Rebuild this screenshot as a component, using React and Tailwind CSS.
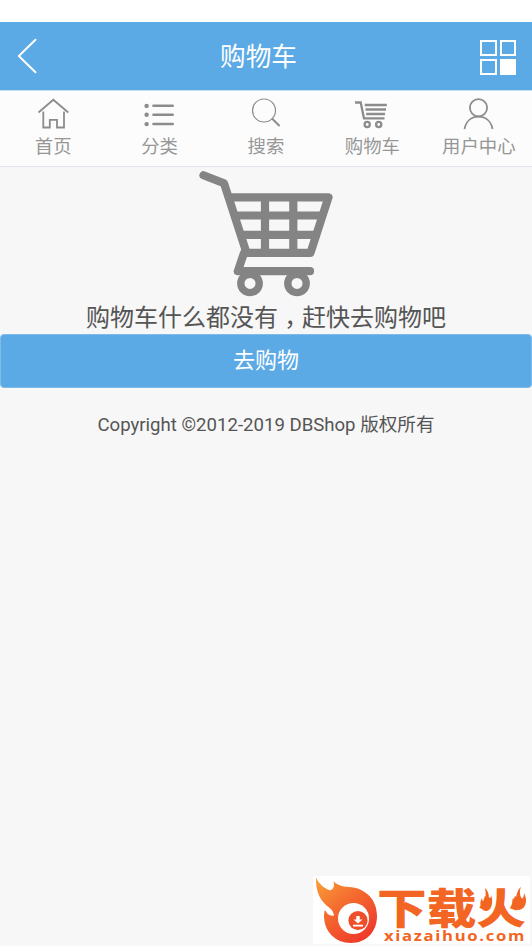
import React from "react";

const NAV_ITEMS = [
  { label: "首页", Icon: HomeIcon },
  { label: "分类", Icon: ListIcon },
  { label: "搜索", Icon: SearchIcon },
  { label: "购物车", Icon: SmallCartIcon },
  { label: "用户中心", Icon: UserIcon },
];

function HomeIcon() {
  return (
    <svg width="32" height="32" viewBox="0 0 32 32" fill="none" stroke="#8c8c8c" strokeWidth="1.8">
      <path d="M1.500 14.500 16.300 1.700 31.300 14.500" />
      <path d="M6.300 13.500V29.500H12.800V21.800H20V29.500H27V13.500" />
    </svg>
  );
}

function ListIcon() {
  return (
    <svg width="32" height="32" viewBox="0 0 32 32" stroke="#8c8c8c" strokeWidth="2.6" strokeLinecap="round">
      <path d="M9.500 7.700H28.700M9.500 16.800H28.700M9.500 26H28.700" />
      <g fill="#8c8c8c" stroke="none">
        <circle cx="2.600" cy="7.900" r="2.200" />
        <circle cx="2.600" cy="16.800" r="2.200" />
        <circle cx="2.600" cy="26.100" r="2.200" />
      </g>
    </svg>
  );
}

function SearchIcon() {
  return (
    <svg width="32" height="32" viewBox="0 0 32 32" fill="none" stroke="#8c8c8c">
      <circle cx="14" cy="12.500" r="11.500" strokeWidth="1.200" />
      <path d="M22 20.500 29.600 28" strokeWidth="2" />
    </svg>
  );
}

function SmallCartIcon() {
  return (
    <svg width="34" height="32" viewBox="0 0 34 32" fill="none" stroke="#8c8c8c" strokeWidth="2.300">
      <path d="M0 4.500H5.700L9 20.400H29.500" />
      <path d="M9.800 7H31.800M10.500 11.500H31M11.200 16H30" />
      <circle cx="12.200" cy="26.500" r="2.600" />
      <circle cx="23.700" cy="26.500" r="2.600" />
    </svg>
  );
}

function UserIcon() {
  return (
    <svg width="32" height="32" viewBox="0 0 32 32" fill="none" stroke="#8c8c8c" strokeWidth="1.800">
      <circle cx="15.500" cy="9.800" r="8.600" />
      <path d="M1.500 31C3 23 8.500 18.700 15.500 18.700S28 23 29.600 31" />
    </svg>
  );
}

function LargeCartIcon() {
  return (
    <svg width="134" height="126" viewBox="199 171 134 126" fill="none" stroke="#848484" strokeWidth="8.200" strokeLinecap="round" strokeLinejoin="round">
      <path d="M203.500 175.300 224 183.300 246.500 252.800H310.500L328.500 197.300H229" />
      <path d="M235.500 215.500H322M241.500 234.900H316M265 198V252M293.300 198V252" />
      <path d="M244 253 237.800 271.200H310" />
      <circle cx="250" cy="283.400" r="9.200" strokeWidth="7.400" />
      <circle cx="297" cy="283.400" r="9.200" strokeWidth="7.400" />
    </svg>
  );
}

function FlameLogo() {
  return (
    <svg className="shrink-0" width="64" height="68" viewBox="313 876 64 68">
      <defs>
        <linearGradient id="flame" x1="0" y1="0" x2="0.7" y2="1">
          <stop offset="0" stopColor="#f9a13a" />
          <stop offset="0.5" stopColor="#f4682e" />
          <stop offset="1" stopColor="#ee3b2b" />
        </linearGradient>
      </defs>
      <path
        d="M316 877.500C319 884 324 888 329 890C333 891 335 886 333.500 881C337 885 342 886.500 349 887C365 888 377 899 377 916C377 932 366 943 351 943C335 943 324 931 324 916C324 914 324.300 911.500 325 910C327 914 330 916.500 334 915.500C333 909 329 908 325 904C317 896 316 887 316 877.500Z"
        fill="url(#flame)"
      />
      <circle cx="353.500" cy="918.500" r="15.500" fill="#fff" />
      <circle cx="358" cy="920.500" r="9.600" fill="#ef4e2b" />
      <path d="M356.300 916H359.700V919.500H362.500L358 923.500L353.500 919.500H356.300ZM353 924.800H363V926.500H353Z" fill="#fff" />
    </svg>
  );
}

function Watermark() {
  return (
    <div className="mr-0.5 mb-0.5 flex h-[68px] w-[217px] bg-white text-[#f26522]">
      <FlameLogo />
      <svg width="153" height="68" viewBox="377 876 153 68" fill="currentColor">
        <text x="377" y="923.500" fontSize="42" fontWeight="900" fontFamily="'Noto Sans CJK SC', sans-serif" textLength="149" lengthAdjust="spacingAndGlyphs">
          下载火
        </text>
        <path d="M485 888C490 893 489 898 488 901C490 900 491 897 491 895C494 903 491 911 486 911C480 911 479 902 482 898C482 900 483 902 484 902C486 897 486 893 485 888Z" />
        <path d="M521 887C519 892 520 896 522 899C524 897 524 895 524 893C528 900 526 909 519 910C513 910 511 903 513 898C514 900 515 901 516 901C516 896 517 890 521 887Z" />
        <text x="384" y="941" fontSize="15" fontWeight="700" fontFamily="'Open Sans', sans-serif" textLength="142" lengthAdjust="spacingAndGlyphs" letterSpacing="1.500">
          xiazaihuo.com
        </text>
      </svg>
    </div>
  );
}

export default function App() {
  return (
    <div className="flex h-[946px] w-[532px] flex-col overflow-hidden bg-[#f7f7f7] font-[Roboto,'Noto_Sans_CJK_SC',sans-serif] text-[#555]">
      <div className="h-[22px] shrink-0 bg-white" />
      <header className="flex h-[68px] shrink-0 items-center justify-between bg-[#5baae6] pr-4 pl-[17px] text-white">
        <button className="w-5" aria-label="返回">
          <svg width="20" height="36" viewBox="0 0 20 36" fill="none" stroke="currentColor" strokeWidth="2" strokeLinecap="round" strokeLinejoin="round">
            <path d="M18.500 1.700 1.800 18 18.500 34.300" />
          </svg>
        </button>
        <h1 className="pt-0.5 text-[25.7px] leading-[66px]">购物车</h1>
        <button className="mt-0.5 grid h-[35px] w-9 grid-cols-2 gap-[3px]" aria-label="菜单">
          <span className="border-2 border-white" />
          <span className="border-2 border-white" />
          <span className="border-2 border-white" />
          <span className="bg-white" />
        </button>
      </header>
      <nav className="grid h-[77px] shrink-0 grid-cols-5 border-t border-b border-t-[#c5dff3] border-b-[#dfe5ea] bg-[#fcfcfc]">
        {NAV_ITEMS.map(({ label, Icon }) => (
          <a key={label} className="flex flex-col items-center pt-[7px] text-[18.4px] leading-[30px] text-[#969696]">
            <Icon />
            <span className="pt-0.5">{label}</span>
          </a>
        ))}
      </nav>
      <main className="flex flex-col items-center pt-1">
        <LargeCartIcon />
        <p className="flex h-[37px] items-center pt-1 text-2xl whitespace-nowrap">
          <span>购物车什么都没有</span>
          <span className="translate-y-[5px] font-['Noto_Sans_CJK_TC',sans-serif]">，</span>
          <span>赶快去购物吧</span>
        </p>
        <button className="h-[54px] w-full rounded border border-[#7cbbea] bg-[#5baae6] pb-0.5 text-[22px] text-white">去购物</button>
        <p className="mt-[22px] text-[18.6px] leading-[30px] whitespace-nowrap">Copyright ©2012-2019 DBShop 版权所有</p>
      </main>
      <footer className="mt-auto flex justify-end">
        <Watermark />
      </footer>
    </div>
  );
}
